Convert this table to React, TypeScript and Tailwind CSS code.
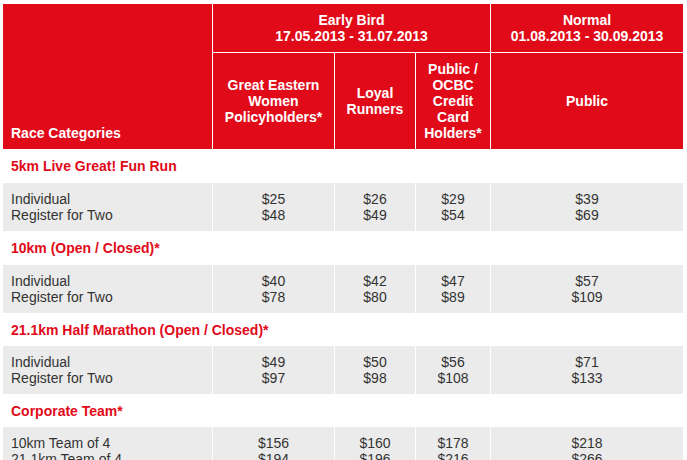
type Section = {
  title: string;
  labels: [string, string];
  prices: [string, string][];
  tight?: boolean;
};

const sections: Section[] = [
  {
    title: '5km Live Great! Fun Run',
    labels: ['Individual', 'Register for Two'],
    prices: [['$25', '$48'], ['$26', '$49'], ['$29', '$54'], ['$39', '$69']],
  },
  {
    title: '10km (Open / Closed)*',
    labels: ['Individual', 'Register for Two'],
    prices: [['$40', '$78'], ['$42', '$80'], ['$47', '$89'], ['$57', '$109']],
  },
  {
    title: '21.1km Half Marathon (Open / Closed)*',
    labels: ['Individual', 'Register for Two'],
    prices: [['$49', '$97'], ['$50', '$98'], ['$56', '$108'], ['$71', '$133']],
    tight: true,
  },
  {
    title: 'Corporate Team*',
    labels: ['10km Team of 4', '21.1km Team of 4'],
    prices: [['$156', '$194'], ['$160', '$196'], ['$178', '$216'], ['$218', '$266']],
    tight: true,
  },
];

export default function App() {
  return (
    <div className="w-[687px] h-[460px] overflow-hidden bg-white pt-[3px] pl-[2px] font-['Liberation_Sans',Arial,sans-serif] text-[14px] leading-4">
      <table className="table-fixed border-separate border-spacing-px w-[682px]">
        <colgroup>
          <col className="w-[209px]" />
          <col className="w-[121px]" />
          <col className="w-[80px]" />
          <col className="w-[74px]" />
          <col className="w-[192px]" />
        </colgroup>
        <thead className="text-white font-bold">
          <tr className="h-[48px]">
            <th rowSpan={2} className="bg-[#e10a19] text-left align-bottom pl-2 pb-2 font-bold">
              Race Categories
            </th>
            <th colSpan={3} className="bg-[#e10a19] text-center align-middle font-bold">
              Early Bird
              <br />
              17.05.2013 - 31.07.2013
            </th>
            <th className="bg-[#e10a19] text-center align-middle font-bold">
              Normal
              <br />
              01.08.2013 - 30.09.2013
            </th>
          </tr>
          <tr className="h-[96px]">
            <th className="bg-[#e10a19] text-center align-middle font-bold">
              Great Eastern
              <br />
              Women
              <br />
              Policyholders*
            </th>
            <th className="bg-[#e10a19] text-center align-middle font-bold">
              Loyal
              <br />
              Runners
            </th>
            <th className="bg-[#e10a19] text-center align-middle font-bold">
              Public /
              <br />
              OCBC
              <br />
              Credit
              <br />
              Card
              <br />
              Holders*
            </th>
            <th className="bg-[#e10a19] text-center align-middle font-bold">Public</th>
          </tr>
        </thead>
        <tbody className="text-[#333333]">
          {sections.map((s) => (
            <SectionRows key={s.title} section={s} />
          ))}
        </tbody>
      </table>
    </div>
  );
}

function SectionRows({ section }: { section: Section }) {
  return (
    <>
      <tr className={section.tight ? 'h-[31px]' : 'h-[32px]'}>
        <td colSpan={5} className="pl-2 align-middle font-bold text-[#e10a19]">
          {section.title}
        </td>
      </tr>
      <tr className="h-[48px]">
        <td className="bg-[#ebebeb] pl-2 align-middle">
          {section.labels[0]}
          <br />
          {section.labels[1]}
        </td>
        {section.prices.map((p, i) => (
          <td key={i} className="bg-[#ebebeb] text-center align-middle">
            {p[0]}
            <br />
            {p[1]}
          </td>
        ))}
      </tr>
    </>
  );
}
